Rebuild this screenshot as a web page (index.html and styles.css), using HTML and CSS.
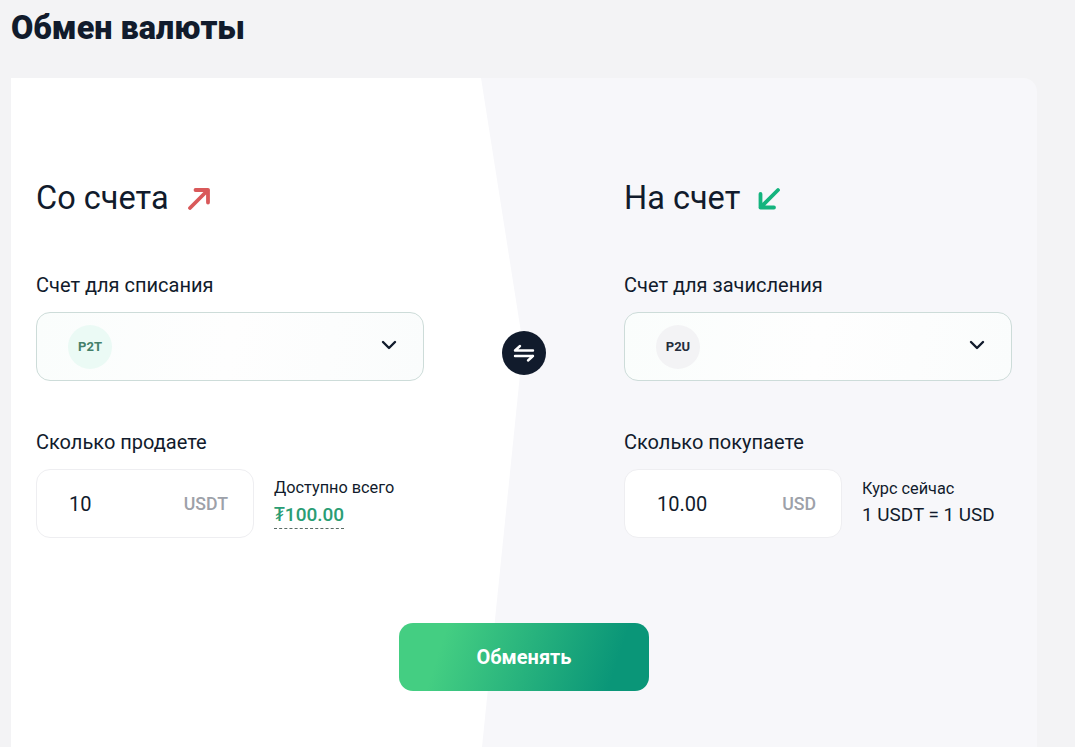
FILE: index.html
```html
<!DOCTYPE html>
<html lang="ru">
<head>
    <meta charset="UTF-8">
    <meta name="viewport" content="width=device-width, initial-scale=1.0">
    <title>Обмен валюты</title>
    <link rel="stylesheet" href="styles.css">
</head>
<body>
    <h1 class="page-title">Обмен валюты</h1>

    <div class="exchange">
        <div class="exchange-columns">
            <section class="side">
                <div class="side-title">
                    <h2>Со счета</h2>
                    <svg class="side-arrow" width="24" height="24" viewBox="0 0 24 24" fill="none" stroke="#d9595a" stroke-width="3.8" stroke-linecap="round" stroke-linejoin="round">
                        <path d="M3 22 L21 4 M8.5 4 H21 V16.5"/>
                    </svg>
                </div>

                <div class="field-label">Счет для списания</div>
                <div class="select">
                    <span class="badge badge-green">P2T</span>
                    <svg class="chevron" width="16" height="10" viewBox="0 0 16 10" fill="none" stroke="#111b2c" stroke-width="2.4" stroke-linecap="round" stroke-linejoin="round">
                        <path d="M2 2 L8 8 L14 2"/>
                    </svg>
                </div>

                <div class="field-label label-amount">Сколько продаете</div>
                <div class="amount-row">
                    <div class="amount">
                        <span class="amount-value">10</span>
                        <span class="amount-currency">USDT</span>
                    </div>
                    <div class="amount-info">
                        <div class="info-title">Доступно всего</div>
                        <div class="info-balance">₮100.00</div>
                    </div>
                </div>
            </section>

            <div class="swap-wrap">
                <div class="swap">
                    <svg width="24" height="20" viewBox="0 0 24 20" fill="none" stroke="#fff" stroke-width="2.4" stroke-linecap="round" stroke-linejoin="round">
                        <path d="M3 7.5 H21 M3 7.5 L8 3 M21 13 H3 M21 13 L16 17.5"/>
                    </svg>
                </div>
            </div>

            <section class="side">
                <div class="side-title">
                    <h2>На счет</h2>
                    <svg class="side-arrow side-arrow-in" width="24" height="24" viewBox="0 0 24 24" fill="none" stroke="#14b47e" stroke-width="3.8" stroke-linecap="round" stroke-linejoin="round">
                        <path d="M21 4 L3.5 21.5 M3.5 8 V21.5 H17"/>
                    </svg>
                </div>

                <div class="field-label">Счет для зачисления</div>
                <div class="select">
                    <span class="badge badge-gray">P2U</span>
                    <svg class="chevron" width="16" height="10" viewBox="0 0 16 10" fill="none" stroke="#111b2c" stroke-width="2.4" stroke-linecap="round" stroke-linejoin="round">
                        <path d="M2 2 L8 8 L14 2"/>
                    </svg>
                </div>

                <div class="field-label label-amount">Сколько покупаете</div>
                <div class="amount-row">
                    <div class="amount">
                        <span class="amount-value">10.00</span>
                        <span class="amount-currency">USD</span>
                    </div>
                    <div class="amount-info">
                        <div class="info-title">Курс сейчас</div>
                        <div class="info-rate">1 USDT = 1 USD</div>
                    </div>
                </div>
            </section>
        </div>

        <div class="exchange-action">
            <button class="submit">Обменять</button>
        </div>
    </div>
</body>
</html>
```

FILE: styles.css
```css
html, body {
    height: 100%;
    overflow: hidden;
}

body {
    margin: 0;
    background-color: #f3f3f5;
    color: #111b2c;
    font-family: Roboto, "Noto Sans", sans-serif;
}

.page-title {
    margin: 0;
    padding: 11px 0 0 11px;
    font-size: 32.4px;
    line-height: 34px;
    font-weight: 900;
}

.exchange {
    position: relative;
    width: 1026px;
    margin: 33px 0 0 11px;
    padding: 100px 25px 80px;
    box-sizing: border-box;
    background-color: #f7f7fa;
    border-radius: 0 14px 0 0;
}

/* white slanted half behind the left column */
.exchange::before {
    content: "";
    position: absolute;
    top: 0;
    left: 0;
    width: 520px;
    height: 669px;
    background-color: #fff;
    clip-path: polygon(0 0, 470px 0, 512px 267px, 471px 669px, 0 669px);
}

.exchange-columns {
    position: relative;
    display: grid;
    grid-template-columns: 388px 200px 388px;
}

.side-title {
    display: flex;
    align-items: center;
    height: 40px;
    margin-bottom: 55px;
}

.side-title h2 {
    margin: 0;
    font-size: 32.5px;
    line-height: 40px;
    font-weight: 400;
}

.side-arrow {
    margin-left: 18px;
}

.side-arrow-in {
    margin-left: 17px;
}

.field-label {
    font-size: 20px;
    line-height: 24px;
    margin-bottom: 15px;
}

.label-amount {
    margin-top: 49px;
}

.select {
    display: flex;
    align-items: center;
    justify-content: space-between;
    height: 69px;
    padding: 0 26px 0 31px;
    box-sizing: border-box;
    background: linear-gradient(100deg, #fafdfc 0%, #fefefe 50%, #fafcfc 100%);
    border: 1px solid #cddcd9;
    border-radius: 14px;
}

.badge {
    display: flex;
    align-items: center;
    justify-content: center;
    width: 44px;
    height: 44px;
    border-radius: 50%;
    font-size: 13px;
    font-weight: 700;
}

.badge-green {
    background-color: #ebfaf5;
    color: #44806a;
}

.badge-gray {
    background-color: #f3f3f5;
    color: #252d3c;
}

.chevron {
    margin-bottom: 4px;
}

.amount-row {
    display: flex;
    align-items: center;
    gap: 20px;
}

.amount {
    display: flex;
    align-items: center;
    justify-content: space-between;
    width: 218px;
    height: 69px;
    padding: 0 25px 0 32px;
    box-sizing: border-box;
    background-color: #fff;
    border: 1px solid #eeeef1;
    border-radius: 14px;
}

.amount-value {
    font-size: 20px;
}

.amount-currency {
    font-size: 17.7px;
    font-weight: 500;
    color: #9da1a9;
}

.info-title {
    font-size: 16.3px;
    line-height: 20px;
    margin-bottom: 3px;
}

.info-balance {
    display: inline-block;
    font-size: 19px;
    line-height: 27px;
    font-weight: 500;
    color: #2a9d74;
    border-bottom: 1px dashed #5a6b66;
}

.info-rate {
    font-size: 18.9px;
    line-height: 26px;
}

.swap-wrap {
    display: flex;
    justify-content: center;
    padding-top: 153px;
}

.swap {
    display: flex;
    align-items: center;
    justify-content: center;
    width: 44px;
    height: 44px;
    border-radius: 50%;
    background-color: #111b2c;
}

.exchange-action {
    position: relative;
    display: flex;
    justify-content: center;
    margin-top: 85px;
}

.submit {
    width: 250px;
    height: 68px;
    border: none;
    border-radius: 14px;
    background: linear-gradient(108deg, #44ce82 18%, #0a9678 85%);
    color: #fff;
    font-family: inherit;
    font-size: 20px;
    font-weight: 700;
}
```
